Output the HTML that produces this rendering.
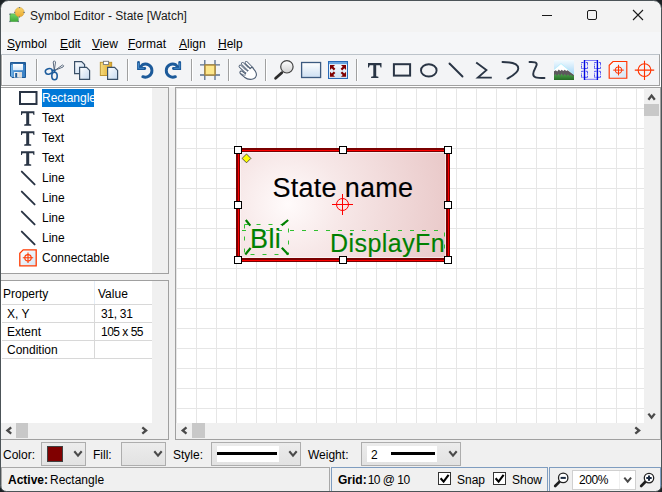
<!DOCTYPE html>
<html><head><meta charset="utf-8">
<style>
*{box-sizing:border-box;margin:0;padding:0}
html,body{width:662px;height:492px;overflow:hidden;background:#f0f0f0}
body{font-family:"Liberation Sans",sans-serif;font-size:12px;color:#000;position:relative}
.a{position:absolute}
.t{position:absolute;white-space:nowrap;line-height:12px;font-size:12px}
.u{text-decoration:underline;text-underline-offset:1px;text-decoration-thickness:1px}
</style></head><body>
<!-- title bar -->
<div class="a" style="left:0;top:0;width:662px;height:32px;background:#f3f3f3"></div>
<div class="a" style="left:0;top:32px;width:662px;height:22px;background:#f5f6f8"></div>
<svg class="a" style="left:8px;top:6px" width="18" height="18" viewBox="0 0 18 18">
  <defs><linearGradient id="gAppG" x1="0" y1="0" x2="0" y2="1"><stop offset="0" stop-color="#72d468"/><stop offset="1" stop-color="#3fa83a"/></linearGradient>
  <linearGradient id="gAppO" x1="0" y1="0" x2="0" y2="1"><stop offset="0" stop-color="#f8d468"/><stop offset="1" stop-color="#e9a830"/></linearGradient></defs>
  <rect x="2" y="7.9" width="8.2" height="7.7" fill="url(#gAppG)" stroke="#3c9a34" stroke-width="0.5"/>
  <circle cx="11.5" cy="6.2" r="4.6" fill="url(#gAppO)" stroke="#d09a30" stroke-width="0.5"/>
  <g fill="#5a6a80"><circle cx="2" cy="8.2" r="0.75"/><circle cx="10.2" cy="15.6" r="0.75"/><circle cx="2" cy="15.6" r="0.75"/><circle cx="11.5" cy="1.6" r="0.7"/><circle cx="16.1" cy="6.4" r="0.7"/><circle cx="6.7" cy="6.4" r="0.6"/><circle cx="11.5" cy="10.9" r="0.6"/></g>
</svg>
<div class="t" style="left:30px;top:10px;color:#1a1a1a">Symbol Editor - State [Watch]</div>
<div class="a" style="left:542px;top:15px;width:10px;height:1px;background:#1a1a1a"></div>
<div class="a" style="left:587px;top:10px;width:10px;height:10px;border:1px solid #1a1a1a;border-radius:2px"></div>
<svg class="a" style="left:632px;top:9px" width="12" height="12" viewBox="0 0 12 12"><path d="M1 1L11 11M11 1L1 11" stroke="#1a1a1a" stroke-width="1.1"/></svg>

<!-- menu -->
<div class="t" style="left:7px;top:38px"><span class="u">S</span>ymbol</div>
<div class="t" style="left:60px;top:38px"><span class="u">E</span>dit</div>
<div class="t" style="left:92px;top:38px"><span class="u">V</span>iew</div>
<div class="t" style="left:128px;top:38px"><span class="u">F</span>ormat</div>
<div class="t" style="left:179px;top:38px"><span class="u">A</span>lign</div>
<div class="t" style="left:218px;top:38px"><span class="u">H</span>elp</div>

<!-- toolbar -->
<div class="a" style="left:0;top:54px;width:660px;height:32px;background:#f3f4f6;border-top:1px solid #bcc3ca;border-bottom:1px solid #a0a0a0;border-right:1px solid #a0a0a0"></div><div class="a" style="left:660px;top:54px;width:1px;height:33px;background:#fff"></div>
<div class="a" style="left:1px;top:55px;width:1px;height:30px;background:#a8a8a8"></div><div class="a" style="left:2px;top:55px;width:1px;height:30px;background:#fff"></div>
<div class="a" style="left:0;top:86px;width:661px;height:1px;background:#fff"></div>
<svg class="a" style="left:0;top:0" width="662" height="90" viewBox="0 0 662 90">
  <defs>
    <linearGradient id="gPage" x1="0" y1="0" x2="1" y2="1"><stop offset="0" stop-color="#ffffff"/><stop offset="1" stop-color="#c4d9f0"/></linearGradient>
    <linearGradient id="gBlue" x1="0" y1="0" x2="1" y2="0"><stop offset="0" stop-color="#80bcec"/><stop offset="0.25" stop-color="#4c92d2"/><stop offset="1" stop-color="#3a80c4"/></linearGradient><linearGradient id="gLabel" x1="0" y1="0" x2="0" y2="1"><stop offset="0" stop-color="#ffffff"/><stop offset="1" stop-color="#d8eafa"/></linearGradient>
    <linearGradient id="gGold" x1="0" y1="0" x2="1" y2="0"><stop offset="0" stop-color="#f6dc80"/><stop offset="1" stop-color="#e0a828"/></linearGradient>
    <linearGradient id="gLens" x1="0" y1="0" x2="0" y2="1"><stop offset="0" stop-color="#ffffff"/><stop offset="1" stop-color="#d0d0d0"/></linearGradient>
    <linearGradient id="gRect" x1="0" y1="0" x2="0" y2="1"><stop offset="0" stop-color="#ffffff"/><stop offset="1" stop-color="#cddff2"/></linearGradient>
    <linearGradient id="gSky" x1="0" y1="0" x2="0" y2="1"><stop offset="0" stop-color="#f4fbff"/><stop offset="1" stop-color="#8ccaf4"/></linearGradient>
    <linearGradient id="gGreen" x1="0" y1="0" x2="0" y2="1"><stop offset="0" stop-color="#4ca84c"/><stop offset="1" stop-color="#266a26"/></linearGradient>
    <linearGradient id="gCon" x1="0" y1="0" x2="1" y2="1"><stop offset="0" stop-color="#ffffff"/><stop offset="1" stop-color="#d4e4f4"/></linearGradient>
  </defs>
  <!-- separators -->
  <g fill="#a0a0a0"><rect x="36" y="59" width="1" height="22"/><rect x="127" y="59" width="1" height="22"/><rect x="191" y="59" width="1" height="22"/><rect x="228" y="59" width="1" height="22"/><rect x="265" y="59" width="1" height="22"/><rect x="356" y="59" width="1" height="22"/></g><g fill="#ffffff"><rect x="37" y="59" width="1" height="22"/><rect x="128" y="59" width="1" height="22"/><rect x="192" y="59" width="1" height="22"/><rect x="229" y="59" width="1" height="22"/><rect x="266" y="59" width="1" height="22"/><rect x="357" y="59" width="1" height="22"/></g>
  <!-- save -->
  <path d="M10.5 62.5H25.5V77.5H12L10.5 76Z" fill="url(#gBlue)" stroke="#1d5a98" stroke-width="1"/>
  <rect x="11" y="63" width="14" height="1" fill="#1a4f8a" opacity="0.6"/>
  <rect x="13" y="64" width="10" height="6.2" fill="url(#gLabel)"/>
  <rect x="14" y="72" width="8" height="5.5" fill="#f2f2f2"/>
  <rect x="18.5" y="72" width="3.5" height="5.5" fill="#dcdcdc"/>
  <rect x="15.2" y="73" width="2" height="4.5" fill="#1d5a98"/>
  <circle cx="11.8" cy="64.2" r="0.5" fill="#1a3a60"/><circle cx="24.2" cy="64.2" r="0.5" fill="#1a3a60"/>
  <!-- scissors -->
  <path d="M54.3 70.5 L53.2 62 Q54.3 59.5 55.5 62 Z" fill="#fff" stroke="#4a5a70" stroke-width="0.9"/>
  <path d="M55 70.3 L62.5 65 Q64.5 65.5 63 67 Z" fill="#fff" stroke="#4a5a70" stroke-width="0.9"/>
  <ellipse cx="48.9" cy="71.4" rx="3.6" ry="2.7" transform="rotate(-15 48.9 71.4)" fill="none" stroke="#1d5c9c" stroke-width="1.6"/>
  <ellipse cx="54.5" cy="76" rx="2.7" ry="3.7" fill="none" stroke="#1d5c9c" stroke-width="1.6"/>
  <path d="M51.5 70.5 L54.8 70.3 L54.5 72.5" fill="none" stroke="#1d5c9c" stroke-width="1.4"/>
  <!-- copy -->
  <path d="M74.6 61.6H81.6L84.6 64.6V73.6H74.6Z" fill="url(#gPage)" stroke="#3a5068" stroke-width="1.2"/>
  <path d="M79.6 67.4H86.6L89.6 70.4V79.4H79.6Z" fill="url(#gPage)" stroke="#3a5068" stroke-width="1.2"/>
  <!-- paste -->
  <rect x="100.3" y="62.3" width="11.4" height="13.2" fill="url(#gGold)" stroke="#b88e28" stroke-width="0.9"/>
  <rect x="103.4" y="61.3" width="5.2" height="3.2" fill="#fff" stroke="#7a7a7a" stroke-width="0.9"/>
  <path d="M107.6 67.4H114.6L117.6 70.4V79.4H107.6Z" fill="url(#gPage)" stroke="#3a5068" stroke-width="1.2"/>
  <!-- undo -->
  <g id="undo">
  <path d="M138.5 62.3V68.5H144.8" fill="none" stroke="#1c5a9a" stroke-width="2.8" stroke-linecap="round" stroke-linejoin="miter"/>
  <path d="M139.2 68 L142.6 64.6 A6.6 6.6 0 1 1 142.8 76.7" fill="none" stroke="#1c5a9a" stroke-width="2.9" stroke-linecap="round"/>
  <path d="M138.5 63V68.3H144" fill="none" stroke="#4a8fd0" stroke-width="0.9"/>
  </g>
  <!-- redo -->
  <g transform="translate(318.2 0) scale(-1 1)">
  <path d="M138.5 62.3V68.5H144.8" fill="none" stroke="#1c5a9a" stroke-width="2.8" stroke-linecap="round" stroke-linejoin="miter"/>
  <path d="M139.2 68 L142.6 64.6 A6.6 6.6 0 1 1 142.8 76.7" fill="none" stroke="#1c5a9a" stroke-width="2.9" stroke-linecap="round"/>
  <path d="M138.5 63V68.3H144" fill="none" stroke="#4a8fd0" stroke-width="0.9"/>
  </g>
  <!-- grid -->
  <rect x="205" y="65" width="10" height="10" fill="#fde78c" stroke="#c8962a" stroke-width="1.2"/>
  <g stroke="#5a6e8c" stroke-width="1.3"><path d="M204.8 60V80M215 60V80M200 64.8H220M200 75H220"/></g>
  <rect x="205.6" y="65.6" width="8.8" height="8.8" fill="#fde78c"/>
  <path d="M205 65H215V75H205Z" fill="none" stroke="#c8962a" stroke-width="1.1"/>
  <!-- hand -->
  <g stroke-linecap="round">
    <path d="M246.3 62.6L252.5 68.8M242.6 63.6L249.8 70.8M240.2 66.3L247.5 73.3" stroke="#4e5e74" stroke-width="3.2"/>
    <path d="M246.3 62.6L252.5 68.8M242.6 63.6L249.8 70.8M240.2 66.3L247.5 73.3" stroke="#fff" stroke-width="1.5"/>
  </g>
  <path d="M252 67 L255.3 71.2 C257.3 74.2 256.5 77.6 253.5 78.8 C250.5 79.8 247 79.2 244.5 77.2 L240.8 74 C239.2 72.6 240 70.6 241.8 71.1 L245.2 73.6 L247.8 70.5 Z" fill="#fff" stroke="#4e5e74" stroke-width="1.1" stroke-linejoin="round"/>
  <path d="M241.6 73.6 C243 75 244.8 75.6 245.8 74.8" fill="none" stroke="#4e5e74" stroke-width="0.8"/>
  <path d="M248 68.6L251.8 72.4M245.6 71L248.8 74" stroke="#fff" stroke-width="1.5" stroke-linecap="round"/>
  <!-- magnifier -->
  <path d="M281.8 72.8 L275.6 78.3" stroke="#2c2c2c" stroke-width="2.8" stroke-linecap="round"/>
  <circle cx="286.9" cy="66.8" r="6.2" fill="url(#gLens)" stroke="#454545" stroke-width="1.2"/>
  <!-- white rect -->
  <rect x="301.6" y="62.5" width="19" height="15" fill="url(#gRect)" stroke="#3c5a80" stroke-width="1.3"/>
  <!-- fit -->
  <rect x="328.5" y="61.5" width="19" height="17" fill="url(#gRect)" stroke="#2a6ab8" stroke-width="1"/>
  <rect x="329" y="62" width="18" height="2.2" fill="#6aa6e0"/>
  <g fill="#800000">
    <path d="M330 65L335 65L333.28 66.72L335.38 68.82L333.82 70.38L331.72 68.28L330 70Z"/>
    <g transform="translate(676 0) scale(-1 1)"><path d="M330 65L335 65L333.28 66.72L335.38 68.82L333.82 70.38L331.72 68.28L330 70Z"/></g>
    <g transform="translate(0 141.8) scale(1 -1)"><path d="M330 65L335 65L333.28 66.72L335.38 68.82L333.82 70.38L331.72 68.28L330 70Z"/></g>
    <g transform="translate(676 141.8) scale(-1 -1)"><path d="M330 65L335 65L333.28 66.72L335.38 68.82L333.82 70.38L331.72 68.28L330 70Z"/></g>
  </g>
  <!-- T -->
  <path d="M368 63H381.5V67.5H380.6L379.8 65.2H376.2V76.2L378.4 76.8V78H371.1V76.8L373.3 76.2V65.2H369.7L368.9 67.5H368Z" fill="#2a3545"/>
  <!-- rect -->
  <rect x="393.9" y="64.2" width="16.2" height="11.4" fill="none" stroke="#2a3545" stroke-width="2"/>
  <!-- ellipse -->
  <ellipse cx="428.8" cy="70.4" rx="7.8" ry="6.1" fill="none" stroke="#2a3545" stroke-width="1.9"/>
  <!-- line -->
  <path d="M449.5 63.5L462.5 76.5" stroke="#2a3545" stroke-width="1.9" stroke-linecap="round"/>
  <!-- polyline -->
  <path d="M476.2 62.4L486.4 70.1L477.9 77.6H491.8" fill="none" stroke="#2a3545" stroke-width="1.9" stroke-linecap="butt" stroke-linejoin="miter"/>
  <!-- curve -->
  <path d="M502.5 62 C510 62 518.3 63.5 518.3 68.5 C518.3 73 512 76 507.5 78.5" fill="none" stroke="#2a3545" stroke-width="1.9" stroke-linecap="round"/>
  <!-- s-curve -->
  <path d="M529.5 62 C534 61.8 537.3 62.2 536.6 65 C535.8 68 533.2 70.5 533.2 74 C533.2 77.6 536 78 544.5 78" fill="none" stroke="#2a3545" stroke-width="1.9" stroke-linecap="round"/>
  <!-- image -->
  <rect x="554" y="60" width="20" height="20" fill="url(#gSky)"/>
  <path d="M554 69.6L561 63.3L574 74.3V80H554Z" fill="#a8f0ff"/>
  <path d="M554 70.1L561 64L574 74.9V80H554Z" fill="#ffffff"/>
  <path d="M554 71.2L555.8 70.2L557.2 71.6L558.8 69.6L560.3 71L561.8 69.7L563.2 70.9L564.8 69.8L566.2 71L567.6 70.2L574 74.9V80H554Z" fill="#5c585c"/>
  <path d="M554 75.8L555.5 73.9L557 75.9L558.6 73.8L560.1 76L561.6 73.6L563.2 75.9L564.8 73.9L566.4 76.1L568 74.2L569.5 76L571 74.4L572.5 76.2L574 75V80H554Z" fill="url(#gGreen)"/>
  <!-- frame -->
  <rect x="585" y="60.5" width="12" height="19" fill="#f0f0fa"/>
  <g fill="none" stroke="#4646f2" stroke-width="0.95" stroke-dasharray="2 0.8 0.7 0.8 2 0">
    <rect x="581.5" y="62.5" width="6" height="6"/><rect x="581.5" y="71.3" width="6" height="6"/>
    <rect x="594.5" y="62.5" width="6" height="6"/><rect x="594.5" y="71.3" width="6" height="6"/>
  </g>
  <path d="M585 60.5H597M585 79.3H597" stroke="#7a7af4" stroke-width="1"/>
  <path d="M584.5 60V80M597.4 60V80" stroke="#0008e0" stroke-width="1.4"/>
  <!-- connect -->
  <path d="M613 61.5H626.8V78.2H609.2V65.3Z" fill="url(#gCon)" stroke="#ff3300" stroke-width="1.15"/>
  <circle cx="618.5" cy="70.1" r="3.3" fill="none" stroke="#ff3300" stroke-width="1"/>
  <path d="M613.2 70.1H623.8M618.5 64.8V75.4" stroke="#ff3300" stroke-width="1"/>
  <!-- crosshair -->
  <circle cx="644.5" cy="70.1" r="6.4" fill="none" stroke="#ff3300" stroke-width="1.1"/>
  <path d="M634.8 70.1H654.2M644.5 60.8V80" stroke="#ff3300" stroke-width="1.1"/>
</svg>


<!-- tree panel -->
<div class="a" style="left:0;top:87px;width:169px;height:187px;background:#fff;border:1px solid #a0a0a0;border-left:none"></div>
<div class="a" style="left:152px;top:88px;width:16px;height:185px;background:#f0f0f0"></div>
<div class="a" style="left:42px;top:89px;width:52px;height:18px;background:#0078d7"></div>
<div class="t" style="left:42px;top:92px;color:#fff">Rectangle</div>
<div class="t" style="left:42px;top:112px">Text</div>
<div class="t" style="left:42px;top:132px">Text</div>
<div class="t" style="left:42px;top:152px">Text</div>
<div class="t" style="left:42px;top:172px">Line</div>
<div class="t" style="left:42px;top:192px">Line</div>
<div class="t" style="left:42px;top:212px">Line</div>
<div class="t" style="left:42px;top:232px">Line</div>
<div class="t" style="left:42px;top:252px">Connectable</div>
<svg class="a" style="left:0;top:0" width="170" height="280" viewBox="0 0 170 280">
  <defs><linearGradient id="gCon2" x1="0" y1="0" x2="1" y2="1"><stop offset="0" stop-color="#ffffff"/><stop offset="1" stop-color="#d4e4f4"/></linearGradient></defs>
  <rect x="20" y="92" width="16.5" height="12" fill="none" stroke="#2a3545" stroke-width="2"/>
  <g id="tT"><path d="M21 111.3H34.4V115H33.6L32.9 113.2H29.2V123.9L31.2 124.6V125.8H24.2V124.6L26.2 123.9V113.2H22.5L21.8 115H21Z" fill="#2a3545"/></g>
  <use href="#tT" y="20"/><use href="#tT" y="40"/>
  <g id="tL"><path d="M21.8 171.6L34.6 184.4" stroke="#2a3545" stroke-width="1.9" stroke-linecap="round"/></g>
  <use href="#tL" y="20"/><use href="#tL" y="40"/><use href="#tL" y="60"/>
  <path d="M23.2 249.8H36.2V265.8H19.8V253.2Z" fill="url(#gCon2)" stroke="#ff3a00" stroke-width="1.3"/>
  <circle cx="28" cy="257.8" r="3.2" fill="none" stroke="#ff3a00" stroke-width="1.1"/>
  <path d="M22.8 257.8H33.2M28 252.6V263" stroke="#ff3a00" stroke-width="1.1"/>
</svg>

<!-- property panel -->
<div class="a" style="left:0;top:280px;width:169px;height:160px;background:#fff;border:1px solid #a0a0a0;border-left:none"></div>
<div class="a" style="left:152px;top:281px;width:16px;height:158px;background:#f0f0f0"></div>
<div class="a" style="left:0;top:423px;width:152px;height:16px;background:#f0f0f0"></div>
<div class="a" style="left:16px;top:423px;width:12px;height:15px;background:#c8c8c8"></div>
<div class="a" style="left:2px;top:304px;width:150px;height:1px;background:#d8d8d8"></div>
<div class="a" style="left:2px;top:322px;width:150px;height:1px;background:#d8d8d8"></div>
<div class="a" style="left:2px;top:340px;width:150px;height:1px;background:#d8d8d8"></div>
<div class="a" style="left:2px;top:358px;width:150px;height:1px;background:#d8d8d8"></div>
<div class="a" style="left:94px;top:281px;width:1px;height:23px;background:#e4ecf6"></div>
<div class="a" style="left:94px;top:305px;width:1px;height:53px;background:#d8d8d8"></div>
<div class="t" style="left:3px;top:288px">Property</div>
<div class="t" style="left:98px;top:288px">Value</div>
<div class="t" style="left:7px;top:308px">X, Y</div>
<div class="t" style="left:101px;top:308px;letter-spacing:-0.3px">31, 31</div>
<div class="t" style="left:7px;top:326px">Extent</div>
<div class="t" style="left:101px;top:326px;letter-spacing:-0.5px">105 x 55</div>
<div class="t" style="left:7px;top:344px">Condition</div>
<svg class="a" style="left:0;top:415px" width="170" height="30" viewBox="0 415 170 30">
  <path d="M11.2 427.4L7.4 430.5L11.2 433.6" fill="none" stroke="#4a4a4a" stroke-width="2.3"/>
  <path d="M142.3 427.4L146.1 430.5L142.3 433.6" fill="none" stroke="#4a4a4a" stroke-width="2.3"/>
</svg>

<!-- canvas -->
<div class="a" style="left:175px;top:87px;width:486px;height:353px;border:1px solid #a0a0a0;background-color:#fff;
  background-image:linear-gradient(to right,#e6e6e6 1px,transparent 1px),linear-gradient(to bottom,#e6e6e6 1px,transparent 1px);
  background-size:20px 20px;background-position:20px 20px"></div>
<div class="a" style="left:644px;top:88px;width:16px;height:351px;background:#f0f0f0"></div>
<div class="a" style="left:176px;top:423px;width:484px;height:16px;background:#f0f0f0"></div>
<div class="a" style="left:644px;top:104px;width:15px;height:12px;background:#c8c8c8"></div>
<div class="a" style="left:192px;top:423px;width:13px;height:15px;background:#c8c8c8"></div>
<svg class="a" style="left:170px;top:88px" width="492" height="352" viewBox="170 88 492 352">
  <path d="M648.4 99.7L651.6 95.6L654.8 99.7" fill="none" stroke="#4a4a4a" stroke-width="2.3"/>
  <path d="M648.4 413.6L651.6 417.7L654.8 413.6" fill="none" stroke="#4a4a4a" stroke-width="2.3"/>
  <path d="M186.5 427.4L182.7 430.5L186.5 433.6" fill="none" stroke="#4a4a4a" stroke-width="2.3"/>
  <path d="M635.3 427.4L639.1 430.5L635.3 433.6" fill="none" stroke="#4a4a4a" stroke-width="2.3"/>
</svg>


<!-- shape -->
<div class="a" style="left:240px;top:152px;width:206px;height:106px;background:radial-gradient(circle 175px at 48px 52px,#fffbfb 0%,#f7e8e8 30%,#e8c6c6 100%)"></div>
<svg class="a" style="left:0;top:0" width="662" height="300" viewBox="0 0 662 300">
  <g fill="none" stroke="#30c030" stroke-width="1" stroke-dasharray="4 8">
    <path d="M242 230.5H450"/>
    <path d="M444.5 232.5V256"/>
    <rect x="244.5" y="224.5" width="44" height="30"/>
  </g>
</svg>
<div class="a" style="left:236px;top:148px;width:214px;height:114px;border:4px solid #7a0000"></div>
<div class="a" style="left:238px;top:150px;width:211px;height:111px;border:1px solid #ff0000"></div>
<div class="a" style="left:240px;top:152px;width:206px;height:106px;border:1px solid rgba(255,255,255,0.55)"></div>
<div class="t" id="sn" style="left:272.6px;top:175.4px;font-size:27px;line-height:27px;letter-spacing:0.25px;-webkit-text-stroke:0.15px #000">State name</div>
<div class="t" id="bli" style="left:250px;top:226px;font-size:27px;line-height:27px;color:#008000;letter-spacing:0.4px;-webkit-text-stroke:0.15px #008000">Bli</div>
<div class="t" id="dfn" style="left:330px;top:231px;font-size:25px;line-height:25px;color:#008000;letter-spacing:0.45px;-webkit-text-stroke:0.15px #008000">DisplayFn</div>
<svg class="a" style="left:0;top:0" width="662" height="300" viewBox="0 0 662 300">
  <g stroke="#008000" stroke-width="2.2" stroke-linecap="butt">
    <path d="M245.8 220L250.3 225.6M288.2 220L281.6 225.3M245.3 254.5L250.6 248M288.2 254.5L281.8 247.8"/>
  </g>
  <g fill="none" stroke="#ff0000" stroke-width="1">
    <circle cx="342.5" cy="204.5" r="6"/>
    <path d="M332 204.5H353M342.5 194V215"/>
  </g>
  <path d="M246.5 154L250.9 158.4L246.5 162.8L242.1 158.4Z" fill="#ffff00" stroke="#333" stroke-width="0.8"/>
  <g fill="#fff" stroke="#000" stroke-width="1">
    <rect x="234.5" y="146.5" width="7" height="7"/><rect x="339.5" y="146.5" width="7" height="7"/><rect x="444.5" y="146.5" width="7" height="7"/>
    <rect x="234.5" y="201.5" width="7" height="7"/><rect x="444.5" y="201.5" width="7" height="7"/>
    <rect x="234.5" y="256.5" width="7" height="7"/><rect x="339.5" y="256.5" width="7" height="7"/><rect x="444.5" y="256.5" width="7" height="7"/>
  </g>
</svg>
<!-- bottom controls -->
<div class="t" style="left:3px;top:449px">Color:</div>
<div class="a" style="left:41px;top:442px;width:45px;height:24px;background:linear-gradient(#ececec,#e2e2e2);border:1px solid #adadad"></div>
<div class="a" style="left:47px;top:446px;width:16px;height:16px;background:#800000;border:1px solid #404040"></div>
<div class="t" style="left:93px;top:449px">Fill:</div>
<div class="a" style="left:121px;top:442px;width:45px;height:24px;background:linear-gradient(#ececec,#e2e2e2);border:1px solid #adadad"></div>
<div class="t" style="left:173px;top:449px">Style:</div>
<div class="a" style="left:211px;top:442px;width:90px;height:24px;background:linear-gradient(#ececec,#e2e2e2);border:1px solid #adadad"></div>
<div class="a" style="left:217px;top:446px;width:62px;height:16px;background:#fff"></div>
<div class="a" style="left:217px;top:452px;width:60px;height:3px;background:#000"></div>
<div class="t" style="left:308px;top:449px">Weight:</div>
<div class="a" style="left:361px;top:442px;width:100px;height:24px;background:linear-gradient(#ececec,#e2e2e2);border:1px solid #adadad"></div>
<div class="a" style="left:367px;top:446px;width:70px;height:16px;background:#fff"></div>
<div class="t" style="left:371px;top:449px">2</div>
<div class="a" style="left:391px;top:452px;width:44px;height:3px;background:#000"></div>
<svg class="a" style="left:0;top:440px" width="662" height="27" viewBox="0 440 662 27">
  <g fill="none" stroke="#4a4a4a" stroke-width="2.1">
    <path d="M74.3 451.3L78 455.6L81.7 451.3"/>
    <path d="M154.3 451.3L158 455.6L161.7 451.3"/>
    <path d="M289.3 451.3L293 455.6L296.7 451.3"/>
    <path d="M449.3 451.3L453 455.6L456.7 451.3"/>
  </g>
</svg>

<!-- status bar -->
<div class="a" style="left:1px;top:467px;width:329px;height:24px;border:1px solid #a8a8a8;border-bottom:none"></div>
<div class="a" style="left:331px;top:467px;width:217px;height:24px;border:1px solid #7f9dc0;border-bottom:none"></div>
<div class="a" style="left:549px;top:467px;width:112px;height:24px;border:1px solid #7f9dc0;border-bottom:none"></div>
<div class="t" style="left:8px;top:474px"><b>Active:</b><span style="margin-left:2px">Rectangle</span></div>
<div class="t" style="left:338px;top:474px"><b>Grid:</b><span style="letter-spacing:-0.5px;margin-left:1px">10 @ 10</span></div>
<div class="a" style="left:438px;top:472px;width:13px;height:13px;background:#fff;border:1px solid #333"></div>
<div class="t" style="left:457px;top:474px">Snap</div>
<div class="a" style="left:493px;top:472px;width:13px;height:13px;background:#fff;border:1px solid #333"></div>
<div class="t" style="left:512px;top:474px">Show</div>
<div class="a" style="left:572px;top:470px;width:64px;height:20px;background:#fff;border:1px solid #d0d0d0"></div>
<div class="a" style="left:619px;top:471px;width:1px;height:18px;background:#f0f0f0"></div>
<div class="t" style="left:579px;top:474px;letter-spacing:-0.4px">200%</div>
<svg class="a" style="left:0;top:466px" width="662" height="26" viewBox="0 466 662 26">
  <path d="M440.6 478.2L443.6 481.6L448.6 474.8" fill="none" stroke="#000" stroke-width="2.1"/>
  <path d="M495.6 478.2L498.6 481.6L503.6 474.8" fill="none" stroke="#000" stroke-width="2.1"/>
  <path d="M624.3 477.6L627.7 481.6L631.1 477.6" fill="none" stroke="#4a4a4a" stroke-width="2"/>
  <path d="M559.6 481.6L555.2 486" stroke="#1e1e1e" stroke-width="2.7" stroke-linecap="round"/>
  <circle cx="563.2" cy="477.9" r="4.7" fill="#fff" stroke="#222" stroke-width="1.3"/>
  <path d="M560.6 477.9H565.8" stroke="#1a2a40" stroke-width="2"/>
  <path d="M645.4 481.8L641.2 486" stroke="#1e1e1e" stroke-width="2.7" stroke-linecap="round"/>
  <circle cx="649" cy="478.1" r="4.7" fill="#fff" stroke="#222" stroke-width="1.3"/>
  <path d="M646.3 478.1H651.7M649 475.4V480.8" stroke="#1a2a40" stroke-width="2"/>
</svg>

<svg class="a" style="left:0;top:0;pointer-events:none" width="662" height="492" viewBox="0 0 662 492">
  <path fill-rule="evenodd" fill="#1c2124" d="M0 0H662V492H0Z M8.5 0.5H653.5A8 8 0 0 1 661.5 8.5V485.5A6 6 0 0 1 655.5 491.5H6.5A6 6 0 0 1 0.5 485.5V8.5A8 8 0 0 1 8.5 0.5Z"/>
  <path fill="none" stroke="#4c5458" stroke-width="1" d="M8.5 0.5H653.5A8 8 0 0 1 661.5 8.5V485.5A6 6 0 0 1 655.5 491.5H6.5A6 6 0 0 1 0.5 485.5V8.5A8 8 0 0 1 8.5 0.5Z"/>
</svg>
</body></html>
